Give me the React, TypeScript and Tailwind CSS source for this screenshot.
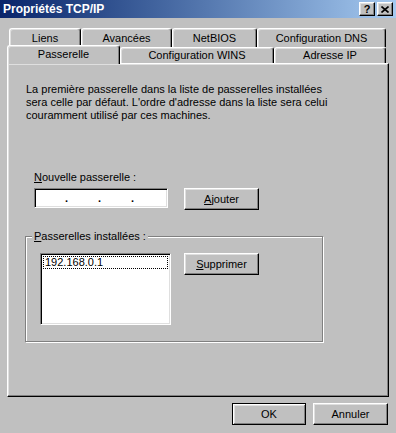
import { clsx } from 'clsx'

const raised =
    'border border-t-white border-l-white border-r-black border-b-black shadow-[inset_-1px_-1px_0_#808080,inset_1px_1px_0_#dfdfdf]'
const sunken =
    'border border-t-[#808080] border-l-[#808080] border-r-white border-b-white shadow-[inset_1px_1px_0_#000,inset_-1px_-1px_0_#dfdfdf]'

function Tab({ label, className, selected }: { label: string; className: string; selected?: boolean }) {
    return (
        <div
            className={clsx(
                'flex items-center justify-center rounded-t-[3px] border-t border-r border-l border-t-white border-r-black border-l-white bg-[#c0c0c0] shadow-[inset_-1px_0_0_#808080,inset_1px_1px_0_#dfdfdf]',
                selected && 'relative z-10 -mb-[1px] pb-[2px]',
                className,
            )}
        >
            {label}
        </div>
    )
}

function Button({ children, className }: { children: React.ReactNode; className?: string }) {
    return (
        <div className={clsx('flex h-[22px] w-[75px] items-center justify-center bg-[#c0c0c0]', raised, className)}>
            {children}
        </div>
    )
}

export default function App() {
    return (
        <div
            className="flex h-[433px] w-[396px] flex-col bg-[#c0c0c0] text-[11px] leading-[13px] text-black"
            style={{ fontFamily: '"Liberation Sans", Arial, sans-serif' }}
        >
            {/* title bar */}
            <div className="flex h-[18px] items-center justify-between bg-linear-to-r from-[#0a246a] to-[#a6caf0] px-[3px]">
                <span className="text-[12px] font-bold text-white">Propriétés TCP/IP</span>
                <div className="flex gap-[2px]">
                    <div className={clsx('flex h-[14px] w-[16px] items-center justify-center bg-[#c0c0c0] text-[11px] leading-none font-bold', raised)}>
                        ?
                    </div>
                    <div className={clsx('flex h-[14px] w-[16px] items-center justify-center bg-[#c0c0c0]', raised)}>
                        <svg width="8" height="7" viewBox="0 0 8 7">
                            <path d="M0.5 0.5 L7.5 6.5 M7.5 0.5 L0.5 6.5" stroke="#000" strokeWidth="1.6" />
                        </svg>
                    </div>
                </div>
            </div>

            {/* tabs */}
            <div className="flex flex-col pt-[10px] pl-[7px]">
                <div className="flex h-[19px] pl-[2px]">
                    <Tab label="Liens" className="h-[19px] w-[72px]" />
                    <Tab label="Avancées" className="h-[19px] w-[91px]" />
                    <Tab label="NetBIOS" className="h-[19px] w-[85px]" />
                    <Tab label="Configuration DNS" className="h-[19px] w-[129px]" />
                </div>
                <div className="flex h-[16px] items-end">
                    <Tab label="Passerelle" className="h-[19px] w-[113px]" selected />
                    <Tab label="Configuration WINS" className="h-[16px] w-[154px]" />
                    <Tab label="Adresse IP" className="h-[16px] w-[112px]" />
                </div>
            </div>

            {/* panel */}
            <div className={clsx('ml-[7px] flex h-[334px] w-[382px] flex-col', raised)}>
                <p className="pt-[19px] pl-[18px]">
                    La première passerelle dans la liste de passerelles installées
                    <br />
                    sera celle par défaut. L'ordre d'adresse dans la liste sera celui
                    <br />
                    couramment utilisé par ces machines.
                </p>

                <div className="mt-[49px] pl-[26px]">
                    <span className="underline">N</span>ouvelle passerelle :
                </div>
                <div className="mt-[4px] flex items-start pl-[26px]">
                    <div className={clsx('flex h-[20px] w-[134px] items-center bg-white font-bold', sunken)}>
                        <span className="w-[30px]" />
                        <span className="w-[3px] text-center">.</span>
                        <span className="w-[30px]" />
                        <span className="w-[3px] text-center">.</span>
                        <span className="w-[30px]" />
                        <span className="w-[3px] text-center">.</span>
                    </div>
                    <Button className="ml-[16px]">
                        <span className="underline">A</span>jouter
                    </Button>
                </div>

                <div className="relative mt-[26px] ml-[17px] flex h-[106px] w-[298px] items-start border border-[#808080] pt-[16px] pl-[14px] shadow-[1px_1px_0_#fff,inset_1px_1px_0_#fff]">
                    <span className="absolute -top-[7px] left-[6px] bg-[#c0c0c0] px-[2px]">
                        <span className="underline">P</span>asserelles installées :
                    </span>
                    <div className={clsx('h-[72px] w-[131px] bg-white p-[2px]', sunken)}>
                        <div className="h-[13px] border border-dotted border-black pl-[1px] leading-[11px]">192.168.0.1</div>
                    </div>
                    <Button className="ml-[13px]">
                        <span className="underline">S</span>upprimer
                    </Button>
                </div>
            </div>

            {/* footer */}
            <div className="flex justify-end gap-[7px] pt-[6px] pr-[8px]">
                <div className="flex h-[22px] w-[74px] items-center justify-center border border-black bg-[#c0c0c0] shadow-[inset_1px_1px_0_#fff,inset_-1px_-1px_0_#808080,inset_2px_2px_0_#dfdfdf]">
                    OK
                </div>
                <Button className="w-[74px]">Annuler</Button>
            </div>
        </div>
    )
}
